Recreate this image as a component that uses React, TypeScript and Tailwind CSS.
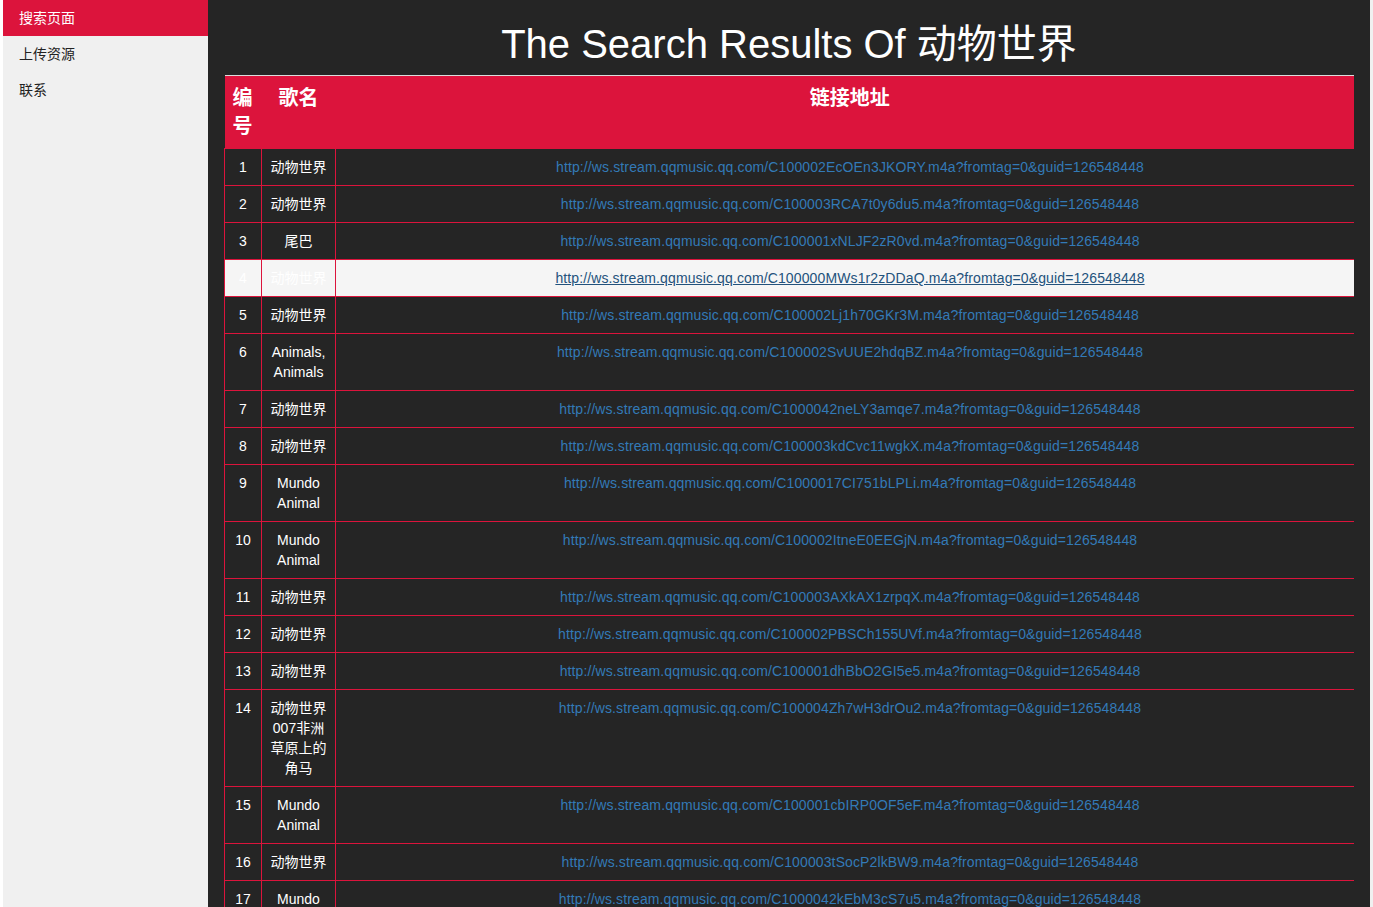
import React from "react";

const rows: [string, string][] = [
  ["动物世界", "C100002EcOEn3JKORY"],
  ["动物世界", "C100003RCA7t0y6du5"],
  ["尾巴", "C100001xNLJF2zR0vd"],
  ["动物世界", "C100000MWs1r2zDDaQ"],
  ["动物世界", "C100002Lj1h70GKr3M"],
  ["Animals, Animals", "C100002SvUUE2hdqBZ"],
  ["动物世界", "C1000042neLY3amqe7"],
  ["动物世界", "C100003kdCvc11wgkX"],
  ["Mundo Animal", "C1000017CI751bLPLi"],
  ["Mundo Animal", "C100002ItneE0EEGjN"],
  ["动物世界", "C100003AXkAX1zrpqX"],
  ["动物世界", "C100002PBSCh155UVf"],
  ["动物世界", "C100001dhBbO2GI5e5"],
  ["动物世界007非洲草原上的角马", "C100004Zh7wH3drOu2"],
  ["Mundo Animal", "C100001cbIRP0OF5eF"],
  ["动物世界", "C100003tSocP2lkBW9"],
  ["Mundo Animal", "C1000042kEbM3cS7u5"],
  ["动物世界", "C100001aBcDeFgHiJk"],
];

export default function App() {
  return (
    <div
      className="flex h-[907px] w-[1373px] overflow-hidden bg-white text-[14px] leading-[20px]"
      style={{ fontFamily: '"Liberation Sans", Arial, "Noto Sans CJK SC", sans-serif' }}
    >
      <div className="ml-[3px] w-[205px] shrink-0 bg-[#f0f0f0]">
        <ul>
          <li className="h-[36px] bg-[#dc143c] px-[16px] py-[8px] text-white">搜索页面</li>
          <li className="h-[36px] px-[16px] py-[8px] text-[#222]">上传资源</li>
          <li className="h-[36px] px-[16px] py-[8px] text-[#222]">联系</li>
        </ul>
      </div>
      <div className="w-[1162px] shrink-0 bg-[#252525]">
        <div className="h-[75px] pt-[22px] text-center">
          <h1 className="text-[40px] leading-[44px] font-normal text-white">The Search Results Of 动物世界</h1>
        </div>
        <div className="px-[16px]">
          <table className="w-full table-fixed border-collapse">
            <colgroup>
              <col className="w-[37px]" />
              <col className="w-[74px]" />
              <col />
            </colgroup>
            <thead>
              <tr className="border-t border-b border-t-[#ddd] border-b-[#dc143c] bg-[#dc143c]">
                <th className="p-[8px] text-left align-top text-[20px] leading-[28px] font-bold text-white">编号</th>
                <th className="p-[8px] text-center align-top text-[20px] leading-[28px] font-bold text-white">歌名</th>
                <th className="py-[8px] pl-[18px] pr-[8px] text-center align-top text-[20px] leading-[28px] font-bold text-white">链接地址</th>
              </tr>
            </thead>
            <tbody>
              {rows.map(([name, id], i) => {
                const hover = i === 3;
                return (
                  <tr
                    key={i}
                    className={
                      hover
                        ? "border-b border-[#dc143c] bg-[#f5f5f5]"
                        : "border-b border-[#dc143c]"
                    }
                  >
                    <td className="border-l border-[#dc143c] p-[8px] text-center align-top text-white">{i + 1}</td>
                    <td className="border-l border-[#dc143c] p-[8px] text-center align-top text-white">{name}</td>
                    <td className="border-l border-[#dc143c] py-[8px] pl-[18px] pr-[8px] text-center align-top">
                      <a
                        href="#"
                        className={
                          hover
                            ? "tracking-[0.12px] text-[#23527c] underline"
                            : "tracking-[0.12px] text-[#337ab7] no-underline"
                        }
                      >
                        {`http://ws.stream.qqmusic.qq.com/${id}.m4a?fromtag=0&guid=126548448`}
                      </a>
                    </td>
                  </tr>
                );
              })}
            </tbody>
          </table>
        </div>
      </div>
      <div className="w-[3px] shrink-0 bg-[#f0f0f0]" />
    </div>
  );
}
